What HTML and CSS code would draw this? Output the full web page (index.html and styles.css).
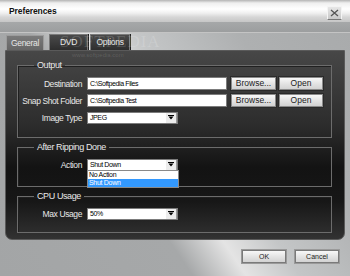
FILE: index.html
```html
<!DOCTYPE html>
<html lang="en">
<head>
    <meta charset="UTF-8">
    <title>Preferences</title>
    <link rel="stylesheet" href="styles.css">
</head>
<body>
    <div class="window">
        <div class="titlebar">
            <span class="title">Preferences</span>
            <span class="close">
                <svg width="9" height="8" viewBox="0 0 9 8"><path d="M1 1 L8 7 M8 1 L1 7" stroke="#555" stroke-width="1.3" fill="none"/></svg>
            </span>
        </div>
        <div class="band"></div>

        <div class="tabs">
            <div class="tab active">General</div>
            <div class="tab">DVD</div>
            <div class="tab">Options</div>
        </div>

        <div class="panel">
            <fieldset class="group">
                <legend>Output</legend>
                <div class="row">
                    <label>Destination</label>
                    <div class="field">C:\Softpedia Files</div>
                    <button class="btn browse">Browse...</button>
                    <button class="btn open">Open</button>
                </div>
                <div class="row">
                    <label>Snap Shot Folder</label>
                    <div class="field">C:\Softpedia Test</div>
                    <button class="btn browse">Browse...</button>
                    <button class="btn open">Open</button>
                </div>
                <div class="row">
                    <label>Image Type</label>
                    <div class="select">
                        <span class="value">JPEG</span>
                        <span class="arrow"><svg width="6" height="5" viewBox="0 0 6 5"><path d="M0 0 H6 V1 H0 Z M0.5 1.5 H5.5 L3 4.5 Z" fill="#000"/></svg></span>
                    </div>
                </div>
            </fieldset>

            <fieldset class="group">
                <legend>After Ripping Done</legend>
                <div class="row">
                    <label>Action</label>
                    <div class="select">
                        <span class="value">Shut Down</span>
                        <span class="arrow"><svg width="6" height="5" viewBox="0 0 6 5"><path d="M0 0 H6 V1 H0 Z M0.5 1.5 H5.5 L3 4.5 Z" fill="#000"/></svg></span>
                        <ul class="dropdown">
                            <li>No Action</li>
                            <li class="selected">Shut Down</li>
                        </ul>
                    </div>
                </div>
            </fieldset>

            <fieldset class="group">
                <legend>CPU Usage</legend>
                <div class="row">
                    <label>Max Usage</label>
                    <div class="select">
                        <span class="value">50%</span>
                        <span class="arrow"><svg width="6" height="5" viewBox="0 0 6 5"><path d="M0 0 H6 V1 H0 Z M0.5 1.5 H5.5 L3 4.5 Z" fill="#000"/></svg></span>
                    </div>
                </div>
            </fieldset>
        </div>

        <div class="footer">
            <button class="btn big">OK</button>
            <button class="btn big">Cancel</button>
        </div>

        <div class="watermark">SOFTPEDIA</div>
        <div class="watermark-url">www.softpedia.com</div>
    </div>
</body>
</html>
```

FILE: styles.css
```css
body {
    margin: 0;
    font-family: "Liberation Sans", Arial, sans-serif;
}
.window {
    position: relative;
    width: 350px;
    height: 276px;
    overflow: hidden;
    background: linear-gradient(56deg, #a3a5a6 0%, #a6a8a9 36%, #e4e4e4 46%, #c4c6c7 56%, #aeb0b1 75%, #a8aaab 100%);
}
.titlebar {
    height: 22px;
    display: flex;
    align-items: flex-start;
    background: linear-gradient(#b4b4b4 0, #efefef 3px, #ffffff 9px, #f0f0f0 13px, #d6d6d6 17px, #c6c6c6 22px);
}
.title {
    margin: 5px 0 0 9px;
    font-weight: bold;
    font-size: 8.5px;
    letter-spacing: -0.1px;
    line-height: 12px;
    color: #111;
}
.close {
    margin: 6px 8px 0 auto;
    width: 13px;
    height: 12px;
    border: 1px solid #f4f4f4;
    border-bottom-color: #777;
    background: linear-gradient(#e6e6e6, #c8c8c8);
    display: flex;
    align-items: center;
    justify-content: center;
}
.band {
    height: 10px;
    background: linear-gradient(#a6a8a9, #9c9e9f);
    border-bottom: 1px solid #c4c4c4;
}
.tabs {
    height: 17px;
    display: flex;
    align-items: flex-end;
    padding-left: 6px;
}
.tab {
    height: 14px;
    width: 36px;
    margin-right: 4px;
    font-size: 8.5px;
    letter-spacing: -0.3px;
    line-height: 14px;
    text-align: center;
    color: #e6e6e6;
    background: linear-gradient(#4a4a4a, #2e2e2e);
    border: 1px solid #7a7a7a;
    border-bottom: none;
    box-shadow: 1px 0 0 #222;
}
.tab.active {
    height: 14px;
    background: linear-gradient(#7a7a7a, #666);
    border-color: #9c9c9c;
    box-shadow: none;
}
.tab:nth-child(2) { width: 37px; height: 15px; margin-left: 1px; margin-right: 2px; }
.tab:nth-child(3) { width: 38px; height: 15px; }

.panel {
    height: 190px;
    margin: 0 5px;
    box-sizing: border-box;
    padding: 8px 12px 0 11px;
    border: 1px solid #5a5a5a;
    border-radius: 0 0 7px 7px;
    background: linear-gradient(#474747 0%, #2c2c2c 40%, #131313 62%, #171717 80%, #323232 100%);
}
.group {
    margin: 3px 0 0 0;
    padding: 6px 0 12px 0;
    min-width: 0;
    border: 1px solid #6c6c6c;
    box-shadow: inset 1px 1px 0 #202020;
}
.group:first-child { margin-top: 0; padding-bottom: 13px; }
.group:nth-child(2) { padding-top: 5px; padding-bottom: 15px; }
.group:nth-child(3) { padding-top: 5px; }
.group legend {
    margin-left: 16px;
    padding: 0 3px 0 3px;
    font-size: 9px;
    letter-spacing: -0.4px;
    line-height: 12px;
    color: #e8e8e8;
}
.row {
    display: flex;
    align-items: center;
    height: 13px;
    margin-bottom: 4px;
}
.row:last-child { margin-bottom: 0; }
.row label {
    width: 64px;
    margin-right: 5px;
    text-align: right;
    white-space: nowrap;
    font-size: 8.5px;
    letter-spacing: -0.4px;
    color: #e8e8e8;
}
.field {
    width: 140px;
    height: 13px;
    box-sizing: border-box;
    padding-left: 2px;
    background: #fff;
    border: 1px solid #7c7c7c;
    font-size: 7px;
    letter-spacing: -0.4px;
    line-height: 11px;
    color: #000;
}
.btn {
    height: 13px;
    padding: 0;
    box-sizing: border-box;
    font-family: "Liberation Sans", sans-serif;
    font-size: 8.5px;
    line-height: 11px;
    color: #222;
    background: linear-gradient(#f8f8f8, #e4e4e4 50%, #d2d2d2);
    border: 1px solid #8a8a8a;
    box-shadow: 0 0 0 1px #2a2a2a;
}
.browse { width: 45px; margin-left: 4px; }
.open { width: 44px; margin-left: 3px; }
.select {
    position: relative;
    width: 91px;
    height: 12px;
    box-sizing: border-box;
    display: flex;
    align-items: center;
    background: #fff;
    border: 1px solid #7c7c7c;
}
.select .value {
    flex: 1;
    padding-left: 2px;
    font-size: 7px;
    letter-spacing: -0.4px;
    color: #000;
}
.select .arrow {
    width: 10px;
    height: 10px;
    display: flex;
    align-items: center;
    justify-content: center;
    background: #ececec;
    border-right: 1px solid #9a9a9a;
}
.dropdown {
    position: absolute;
    top: 10px;
    left: -1px;
    width: 90px;
    margin: 0;
    padding: 0;
    list-style: none;
    background: #fff;
    border: 1px solid #8a8a8a;
}
.dropdown li {
    height: 8px;
    padding-left: 1px;
    font-size: 7px;
    letter-spacing: -0.3px;
    line-height: 8px;
    color: #000;
}
.dropdown li.selected {
    background: #3399ff;
    color: #fff;
}
.footer {
    display: flex;
    justify-content: flex-end;
    gap: 9px;
    padding: 10px 11px 0 0;
}
.big {
    width: 44px;
    font-size: 7px;
    box-shadow: 0 0 0 1px #9a9a9a;
    border-color: #7a7a7a;
}
.watermark {
    position: absolute;
    left: 60px;
    top: 32px;
    font-family: "Liberation Serif", serif;
    font-size: 17px;
    letter-spacing: 1px;
    color: rgba(255, 255, 255, 0.16);
}
.watermark-url {
    position: absolute;
    left: 72px;
    top: 52px;
    font-size: 6px;
    color: rgba(255, 255, 255, 0.14);
}
```
